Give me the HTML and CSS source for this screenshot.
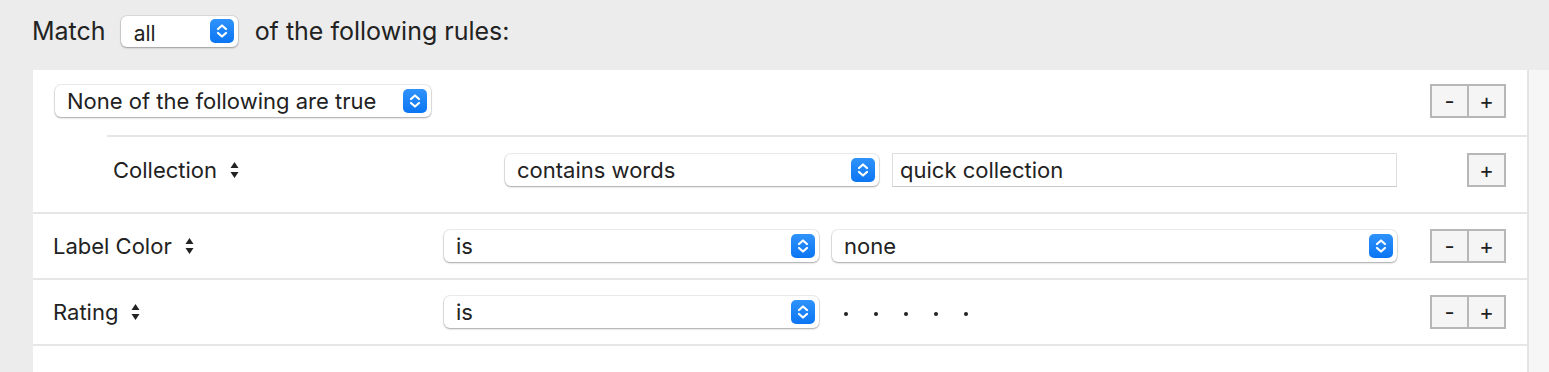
FILE: index.html
```html
<!DOCTYPE html>
<html lang="en">
<head>
    <meta charset="UTF-8">
    <title>Smart Collection Rules</title>
    <link rel="stylesheet" href="styles.css">
</head>
<body>
<div class="header">
    <span class="caption">Match</span>
    <div class="popup popup-small">
        <span class="popup-text">all</span>
        <span class="arrows"><svg width="24" height="24" viewBox="0 0 24 24"><path d="M8 10 L12 6.5 L16 10 M8 14 L12 17.5 L16 14" fill="none" stroke="#fff" stroke-width="2.2" stroke-linecap="round" stroke-linejoin="round"/></svg></span>
    </div>
    <span class="caption">of the following rules:</span>
</div>

<div class="editor">
    <div class="rules">
        <div class="group">
            <div class="row-head">
                <div class="popup popup-compound">
                    <span class="popup-text">None of the following are true</span>
                    <span class="arrows"><svg width="24" height="24" viewBox="0 0 24 24"><path d="M8 10 L12 6.5 L16 10 M8 14 L12 17.5 L16 14" fill="none" stroke="#fff" stroke-width="2.2" stroke-linecap="round" stroke-linejoin="round"/></svg></span>
                </div>
                <div class="buttons">
                    <div class="btn">-</div>
                    <div class="btn">+</div>
                </div>
            </div>
            <div class="nested">
                <div class="row row-nested">
                    <div class="field-name">Collection
                        <svg class="stepper" width="9" height="18" viewBox="0 0 9 18"><path d="M0.5 7 L4.5 1 L8.5 7 Z M0.5 11 L4.5 17 L8.5 11 Z" fill="#222"/></svg>
                    </div>
                    <div class="popup popup-op">
                        <span class="popup-text">contains words</span>
                        <span class="arrows"><svg width="24" height="24" viewBox="0 0 24 24"><path d="M8 10 L12 6.5 L16 10 M8 14 L12 17.5 L16 14" fill="none" stroke="#fff" stroke-width="2.2" stroke-linecap="round" stroke-linejoin="round"/></svg></span>
                    </div>
                    <div class="textfield">quick collection</div>
                    <div class="buttons">
                        <div class="btn">+</div>
                    </div>
                </div>
            </div>
        </div>

        <div class="row">
            <div class="field-name">Label Color
                <svg class="stepper" width="9" height="18" viewBox="0 0 9 18"><path d="M0.5 7 L4.5 1 L8.5 7 Z M0.5 11 L4.5 17 L8.5 11 Z" fill="#222"/></svg>
            </div>
            <div class="popup popup-op">
                <span class="popup-text">is</span>
                <span class="arrows"><svg width="24" height="24" viewBox="0 0 24 24"><path d="M8 10 L12 6.5 L16 10 M8 14 L12 17.5 L16 14" fill="none" stroke="#fff" stroke-width="2.2" stroke-linecap="round" stroke-linejoin="round"/></svg></span>
            </div>
            <div class="popup popup-value">
                <span class="popup-text">none</span>
                <span class="arrows"><svg width="24" height="24" viewBox="0 0 24 24"><path d="M8 10 L12 6.5 L16 10 M8 14 L12 17.5 L16 14" fill="none" stroke="#fff" stroke-width="2.2" stroke-linecap="round" stroke-linejoin="round"/></svg></span>
            </div>
            <div class="buttons">
                <div class="btn">-</div>
                <div class="btn">+</div>
            </div>
        </div>

        <div class="row">
            <div class="field-name">Rating
                <svg class="stepper" width="9" height="18" viewBox="0 0 9 18"><path d="M0.5 7 L4.5 1 L8.5 7 Z M0.5 11 L4.5 17 L8.5 11 Z" fill="#222"/></svg>
            </div>
            <div class="popup popup-op">
                <span class="popup-text">is</span>
                <span class="arrows"><svg width="24" height="24" viewBox="0 0 24 24"><path d="M8 10 L12 6.5 L16 10 M8 14 L12 17.5 L16 14" fill="none" stroke="#fff" stroke-width="2.2" stroke-linecap="round" stroke-linejoin="round"/></svg></span>
            </div>
            <div class="rating">
                <span class="dot"></span>
                <span class="dot"></span>
                <span class="dot"></span>
                <span class="dot"></span>
                <span class="dot"></span>
            </div>
            <div class="buttons">
                <div class="btn">-</div>
                <div class="btn">+</div>
            </div>
        </div>
    </div>
    <div class="scroller"></div>
</div>
</body>
</html>
```

FILE: styles.css
```css
html, body{
    height: 100%;
}
body{
    margin: 0;
    background: #ececec;
    font-family: Inter, "Noto Sans", sans-serif;
    color: #222;
    display: flex;
    flex-direction: column;
}
.header{
    height: 70px;
    display: flex;
    align-items: center;
    padding-left: 32px;
    box-sizing: border-box;
    padding-bottom: 8px;
}
.caption{
    font-size: 25px;
}
.popup{
    display: flex;
    align-items: center;
    justify-content: space-between;
    height: 32px;
    box-sizing: border-box;
    background: #fff;
    border-radius: 6px;
    box-shadow: 0 0 0 1px rgba(0,0,0,0.07), 0 1px 2px rgba(0,0,0,0.3);
    padding: 0 4px 0 12px;
    font-size: 22px;
}
.popup-small{
    width: 117px;
    height: 31px;
    margin: 0 17px 0 15px;
    padding-left: 13px;
}
.popup-small .popup-text{
    padding-top: 4px;
    font-size: 21px;
}
.popup-compound{
    width: 376px;
}
.popup-op{
    width: 375px;
}
.popup-value{
    width: 565px;
    margin-left: 13px;
}
.arrows{
    width: 24px;
    height: 24px;
    border-radius: 5px;
    background: linear-gradient(#2f93fb, #0b75f3);
    display: flex;
}
.editor{
    flex: 1;
    display: flex;
    margin-left: 33px;
}
.rules{
    flex: 1;
    background: #fff;
}
.scroller{
    width: 20px;
    background: #f6f6f6;
    border-left: 2px solid #e4e4e4;
}
.group{
    border-bottom: 2px solid #e6e6e6;
}
.row-head{
    display: flex;
    align-items: center;
    justify-content: space-between;
    padding: 14px 21px 17px 22px;
}
.nested{
    margin-left: 74px;
    border-top: 2px solid #e6e6e6;
}
.row{
    display: flex;
    align-items: center;
    height: 64px;
    padding: 0 21px 0 20px;
    border-bottom: 2px solid #e6e6e6;
}
.row-nested{
    height: auto;
    border-bottom: none;
    padding: 16px 21px 25px 6px;
}
.field-name{
    width: 391px;
    font-size: 22px;
    display: flex;
    align-items: center;
}
.row-nested .field-name{
    width: 392px;
}
.row-nested .popup-op{
    width: 374px;
}
.stepper{
    margin-left: 13px;
}
.textfield{
    width: 505px;
    height: 34px;
    box-sizing: border-box;
    margin-left: 13px;
    border: 1px solid #dedede;
    border-bottom-color: #c9c9c9;
    padding-left: 7px;
    font-size: 22px;
    display: flex;
    align-items: center;
}
.rating{
    display: flex;
    gap: 26px;
    margin-left: 25px;
    padding-top: 4px;
}
.dot{
    width: 4px;
    height: 4px;
    border-radius: 50%;
    background: #222;
}
.buttons{
    display: flex;
    margin-left: auto;
}
.btn{
    width: 39px;
    height: 34px;
    box-sizing: border-box;
    border: 2px solid #b7b7b7;
    background: #f5f5f5;
    display: flex;
    align-items: center;
    justify-content: center;
    font-size: 22px;
    color: #222;
}
.btn + .btn{
    margin-left: -2px;
}
```
